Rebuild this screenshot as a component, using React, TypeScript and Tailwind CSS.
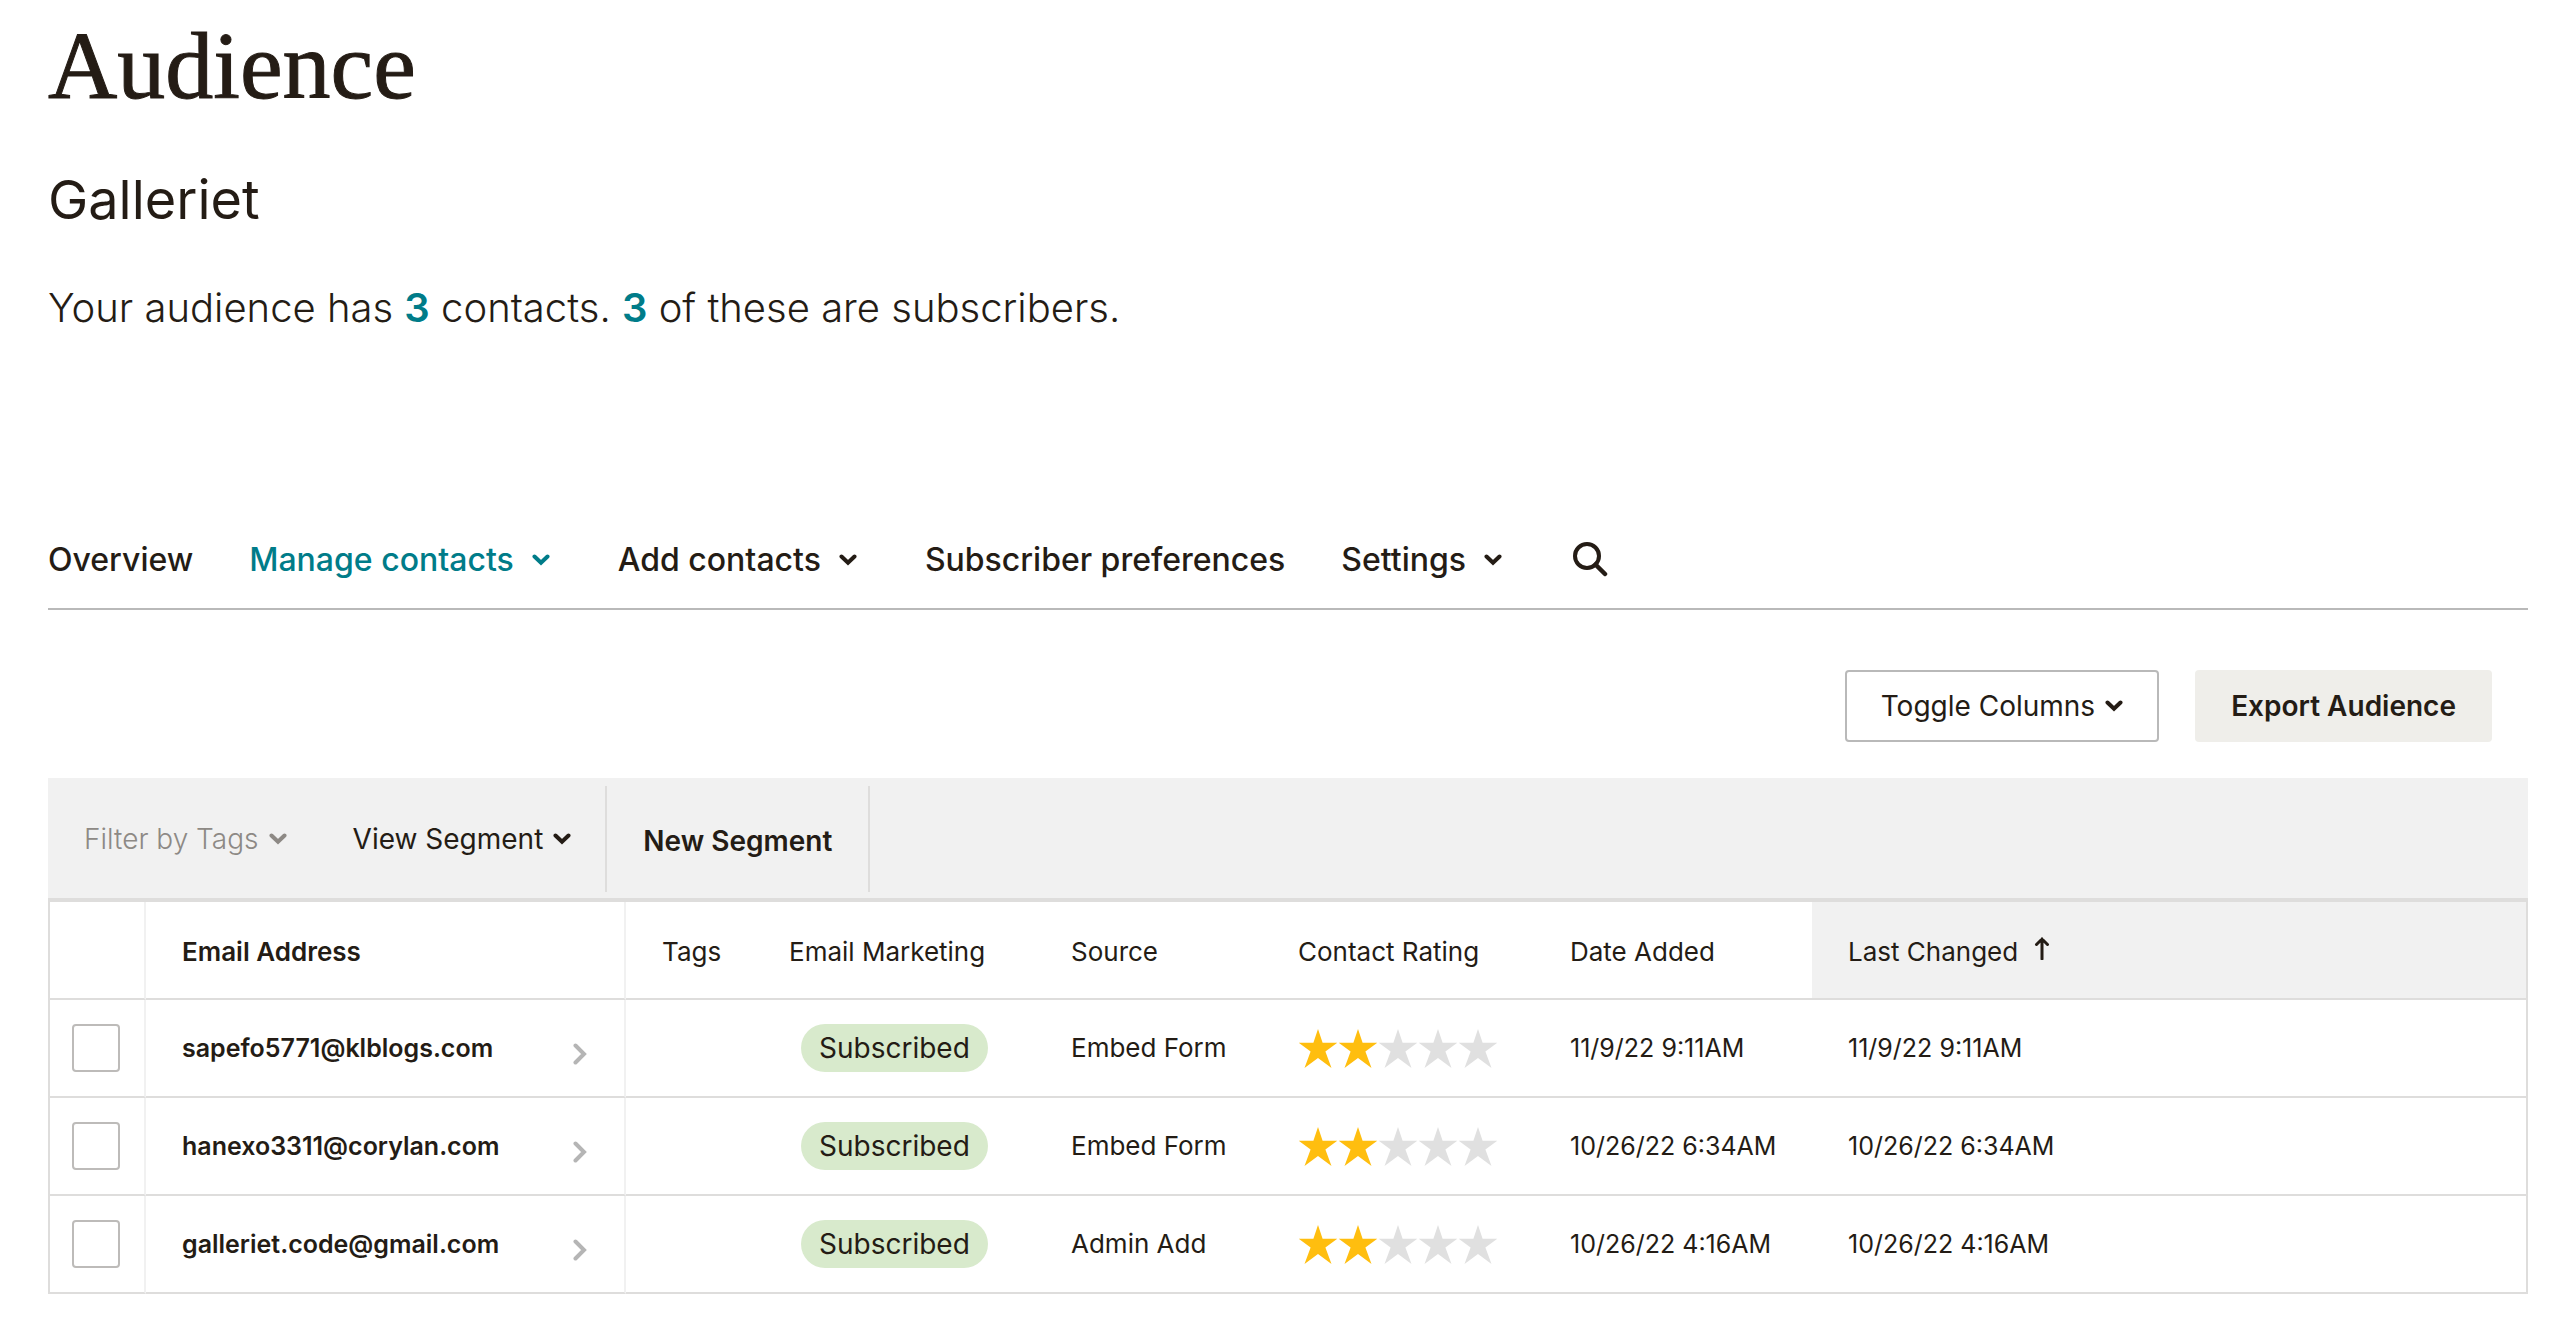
import React from "react";

function Chevron({ className = "" }: { className?: string }) {
  return (
    <svg viewBox="0 0 18 12" className={"h-3 w-[18px] shrink-0 " + className} fill="none" stroke="currentColor" strokeWidth="4" aria-hidden="true">
      <path d="M2.5 2.5 L9 8.8 L15.5 2.5" strokeLinecap="round" />
    </svg>
  );
}

function Stars({ value }: { value: number }) {
  return (
    <div className="flex" role="img" aria-label={`${value} out of 5 stars`}>
      {[1, 2, 3, 4, 5].map((n) => (
        <svg key={n} viewBox="0 0 40 40" className={n <= value ? "size-10 text-[#ffbe0f]" : "size-10 text-[#e0e0e0]"} fill="currentColor" aria-hidden="true">
          <path d="M20 1 L24.6 14.7 L39.3 14.7 L27.4 23.4 L33.5 40 L20 30 L6.5 40 L12.6 23.4 L0.7 14.7 L15.4 14.7 Z" />
        </svg>
      ))}
    </div>
  );
}

const contacts = [
  { email: "sapefo5771@klblogs.com", source: "Embed Form", rating: 2, added: "11/9/22 9:11AM", changed: "11/9/22 9:11AM" },
  { email: "hanexo3311@corylan.com", source: "Embed Form", rating: 2, added: "10/26/22 6:34AM", changed: "10/26/22 6:34AM" },
  { email: "galleriet.code@gmail.com", source: "Admin Add", rating: 2, added: "10/26/22 4:16AM", changed: "10/26/22 4:16AM" },
];

function Tabs() {
  return (
    <nav className="mt-[198px] flex h-[74px] items-start gap-14 border-b-2 border-[#b9b9b9] text-[32px] leading-[48px] font-medium whitespace-nowrap">
      <a href="#overview">Overview</a>
      <button className="flex items-center gap-[18px] pr-3 font-medium text-[#007c89]">
        Manage contacts <Chevron />
      </button>
      <button className="flex items-center gap-[18px] pr-3 font-medium">
        Add contacts <Chevron />
      </button>
      <a href="#preferences">Subscriber preferences</a>
      <button className="flex items-center gap-[18px] pr-3 font-medium">
        Settings <Chevron />
      </button>
      <button aria-label="Search" className="flex h-[46px] items-center pl-0.5">
        <svg viewBox="0 0 36 36" className="size-9" fill="none" stroke="currentColor" strokeWidth="4" aria-hidden="true">
          <circle cx="15" cy="15" r="12" />
          <path d="M23.5 23.5 L33 33" strokeWidth="4.5" strokeLinecap="round" />
        </svg>
      </button>
    </nav>
  );
}

export default function App() {
  return (
    <main className="min-h-screen bg-white pt-3 pr-[47px] pl-12 font-[Inter,sans-serif] text-[#241c15]">
      <h1 className="font-['Liberation_Serif',serif] text-[96px] leading-[108px] [-webkit-text-stroke:1px_#241c15]">Audience</h1>
      <h2 className="mt-11 text-[54px] leading-[72px]">Galleriet</h2>
      <p className="mt-[42px] text-[40px] leading-[60px] font-light">
        Your audience has <a href="#contacts" className="font-semibold text-[#007c89]">3</a> contacts.{" "}
        <a href="#subscribers" className="font-semibold text-[#007c89]">3</a> of these are subscribers.
      </p>

      <Tabs />

      <div className="mt-[60px] flex justify-end gap-9 pr-9 text-[28px] leading-9">
        <button className="flex h-[72px] items-center gap-2.5 rounded-sm border-2 border-[#b9b9b9] px-[34px]">
          Toggle Columns <Chevron />
        </button>
        <button className="h-[72px] rounded-sm bg-[#efeeea] px-9 font-semibold">Export Audience</button>
      </div>

      <div className="mt-9 flex h-[124px] border-b-4 border-[#dedddc] bg-[#f1f1f1] pt-2 pb-1.5 text-[28px] leading-9">
        <div className="flex items-center gap-[66px] border-r-2 border-[#dedddc] pr-[34px] pl-9">
          <button disabled className="flex items-center gap-2.5 font-light text-[#8d8985]">
            Filter by Tags <Chevron />
          </button>
          <button className="flex items-center gap-2.5">
            View Segment <Chevron />
          </button>
        </div>
        <button className="border-r-2 border-[#dedddc] px-9 pt-1 font-semibold">New Segment</button>
      </div>

      <table className="w-full table-fixed border-separate border-spacing-0 border-x-2 border-[#dedddc] text-left text-[26px] leading-9">
        <colgroup>
          <col className="w-24" />
          <col className="w-[480px]" />
          <col className="w-[127px]" />
          <col className="w-[282px]" />
          <col className="w-[227px]" />
          <col className="w-[272px]" />
          <col className="w-[278px]" />
          <col />
        </colgroup>
        <thead>
          <tr className="h-[98px] whitespace-nowrap [&>th]:border-b-2 [&>th]:border-b-[#dedddc] [&>th]:px-9 [&>th]:pt-1">
            <th className="border-r-2 border-r-[#f1f1f1]" aria-label="Select" />
            <th className="border-r-2 border-r-[#f1f1f1] font-semibold">Email Address</th>
            <th className="font-normal">Tags</th>
            <th className="font-normal">Email Marketing</th>
            <th className="font-normal">Source</th>
            <th className="font-normal">Contact Rating</th>
            <th className="font-normal">Date Added</th>
            <th className="bg-[#f1f1f1] font-normal">
              <button className="flex items-center gap-4">
                Last Changed
                <svg viewBox="0 0 16 24" className="mb-2 h-6 w-4" fill="none" stroke="currentColor" strokeWidth="3" aria-hidden="true">
                  <path d="M8 23 V3 M2.5 8.5 L8 3 L13.5 8.5" strokeLinecap="round" />
                </svg>
              </button>
            </th>
          </tr>
        </thead>
        <tbody>
          {contacts.map((c) => (
            <tr key={c.email} className="h-[98px] whitespace-nowrap [&>td]:border-b-2 [&>td]:border-b-[#dedddc] [&>td]:px-9">
              <td className="border-r-2 border-r-[#f1f1f1] !px-[22px]">
                <input type="checkbox" aria-label={`Select ${c.email}`} className="block size-12 appearance-none rounded-sm border-2 border-[#bdbbb9] bg-white checked:bg-[#007c89]" />
              </td>
              <td className="border-r-2 border-r-[#f1f1f1]">
                <a href="#contact" className="flex items-center justify-between text-[25px] font-semibold">
                  {c.email}
                  <svg viewBox="0 0 16 22" className="mt-3 h-[22px] w-4 text-[#b5b5b5]" fill="none" stroke="currentColor" strokeWidth="4" aria-hidden="true">
                    <path d="M3.5 2.5 L12 11 L3.5 19.5" strokeLinecap="round" />
                  </svg>
                </a>
              </td>
              <td />
              <td>
                <span className="ml-3 inline-flex h-12 items-center rounded-full bg-[#d8eacc] px-[18px] align-middle text-[28px]">Subscribed</span>
              </td>
              <td>{c.source}</td>
              <td>
                <Stars value={c.rating} />
              </td>
              <td className="text-[25px]">{c.added}</td>
              <td className="text-[25px]">{c.changed}</td>
            </tr>
          ))}
        </tbody>
      </table>
    </main>
  );
}
